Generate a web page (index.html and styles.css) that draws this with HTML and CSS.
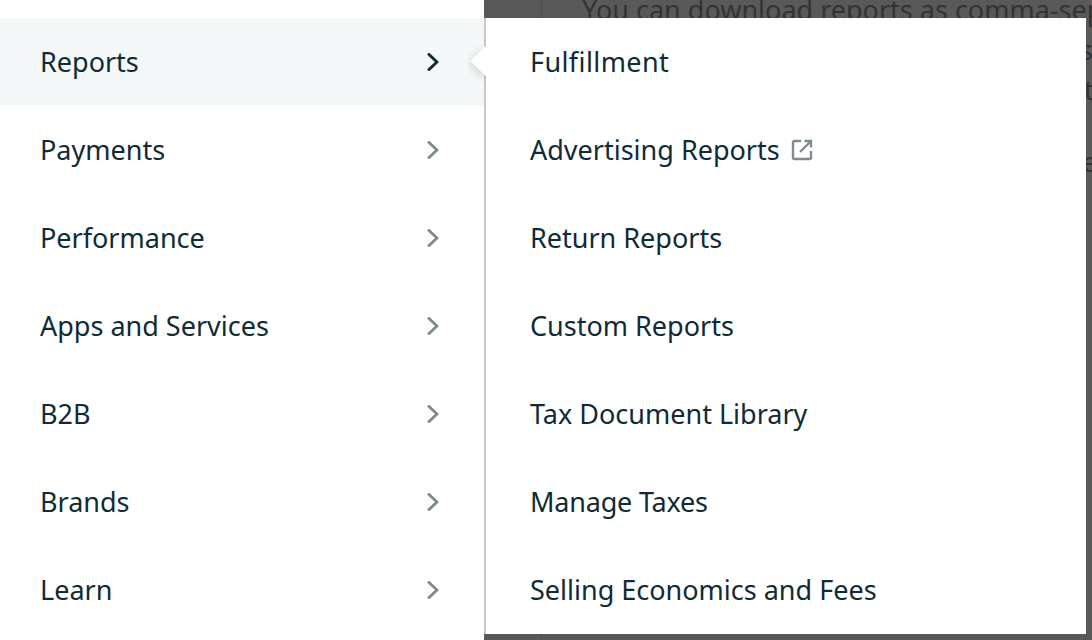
FILE: index.html
```html
<!DOCTYPE html>
<html lang="en">
<head>
<meta charset="utf-8">
<title>Reports menu</title>
<link rel="stylesheet" href="styles.css">
</head>
<body>
<div class="shell">
  <nav class="main-menu">
    <a class="main-item active"><span>Reports</span><svg class="chev" viewBox="0 0 14 18"><path d="M3 1.500L11 9 3 16.500"/></svg></a>
    <a class="main-item"><span>Payments</span><svg class="chev" viewBox="0 0 14 18"><path d="M3 1.500L11 9 3 16.500"/></svg></a>
    <a class="main-item"><span>Performance</span><svg class="chev" viewBox="0 0 14 18"><path d="M3 1.500L11 9 3 16.500"/></svg></a>
    <a class="main-item"><span>Apps and Services</span><svg class="chev" viewBox="0 0 14 18"><path d="M3 1.500L11 9 3 16.500"/></svg></a>
    <a class="main-item"><span>B2B</span><svg class="chev" viewBox="0 0 14 18"><path d="M3 1.500L11 9 3 16.500"/></svg></a>
    <a class="main-item"><span>Brands</span><svg class="chev" viewBox="0 0 14 18"><path d="M3 1.500L11 9 3 16.500"/></svg></a>
    <a class="main-item"><span>Learn</span><svg class="chev" viewBox="0 0 14 18"><path d="M3 1.500L11 9 3 16.500"/></svg></a>
  </nav>
  <div class="backdrop">
    <div class="page-layer">
      <div class="page-rule"></div>
      <p class="page-text line-top">You can download reports as comma-separated</p>
      <p class="page-text frag-a">s</p>
      <p class="page-text frag-b">t</p>
      <p class="page-text frag-c">e</p>
    </div>
    <div class="sub-menu">
      <span class="notch"></span>
      <a class="sub-item"><span class="wide">Fulfillment</span></a>
      <a class="sub-item"><span>Advertising Reports</span><svg class="ext" viewBox="0 0 24 24"><path d="M11 3H4.500A1.500 1.500 0 0 0 3 4.500v15A1.500 1.500 0 0 0 4.500 21h15a1.500 1.500 0 0 0 1.500-1.500V13"/><path d="M10 14L21 3M14.500 3H21V9.500"/></svg></a>
      <a class="sub-item"><span>Return Reports</span></a>
      <a class="sub-item"><span>Custom Reports</span></a>
      <a class="sub-item"><span>Tax Document Library</span></a>
      <a class="sub-item"><span class="tight">Manage Taxes</span></a>
      <a class="sub-item"><span>Selling Economics and Fees</span></a>
    </div>
  </div>
</div>
</body>
</html>
```

FILE: styles.css
```css
* { box-sizing: border-box; }
html, body { margin: 0; height: 100%; background: #fff; overflow: hidden; }
body { font-family: "Noto Sans", "Open Sans", sans-serif; color: #0f2b36; font-variant-ligatures: none; }
.shell { display: flex; width: 1092px; height: 640px; }
.main-menu { width: 484px; padding-top: 18px; flex: none; background: #fff; }
.main-item { display: flex; align-items: center; justify-content: space-between; height: 88px; padding: 0 44px 2px 40px; font-size: 27px; }
.main-item.active { background: #f4f8f9; }
.chev { width: 14px; height: 18px; margin-top: 2px; fill: none; stroke: #7f8c8e; stroke-width: 3; stroke-linecap: round; stroke-linejoin: round; }
.active .chev { stroke: #0f2b36; }
.backdrop { position: relative; flex: 1; background: #595959; padding: 18px 6px 6px 0; }
.page-layer { position: absolute; inset: 0; overflow: hidden; }
.page-rule { position: absolute; left: 57px; top: 0; bottom: 0; width: 1px; background: #4c4c4c; }
.page-text { position: absolute; margin: 0; font-size: 27px; line-height: 36px; color: #333; white-space: nowrap; }
.line-top { left: 98px; top: -8px; }
.frag-a { left: 596px; top: 32px; }
.frag-b { left: 600px; top: 72px; }
.frag-c { left: 598px; top: 144px; }
.sub-menu { position: relative; height: 100%; background: #fff; border-left: 2px solid #c8c8c8; }
.notch { position: absolute; left: -18px; top: 18px; width: 18px; height: 60px; overflow: hidden; }
.notch::before { content: ""; position: absolute; left: 7px; top: 14px; width: 22px; height: 22px; background: #fff; transform: rotate(45deg); box-shadow: 0 4px 9px rgba(0, 0, 0, 0.12); }
.sub-item { display: flex; align-items: center; height: 88px; padding: 0 0 2px 44px; font-size: 27px; }
.wide { letter-spacing: 0.4px; }
.tight { letter-spacing: -0.2px; }
.ext { width: 24px; height: 24px; margin: 2px 0 0 10px; fill: none; stroke: #7f8c8e; stroke-width: 2.4; }
```
